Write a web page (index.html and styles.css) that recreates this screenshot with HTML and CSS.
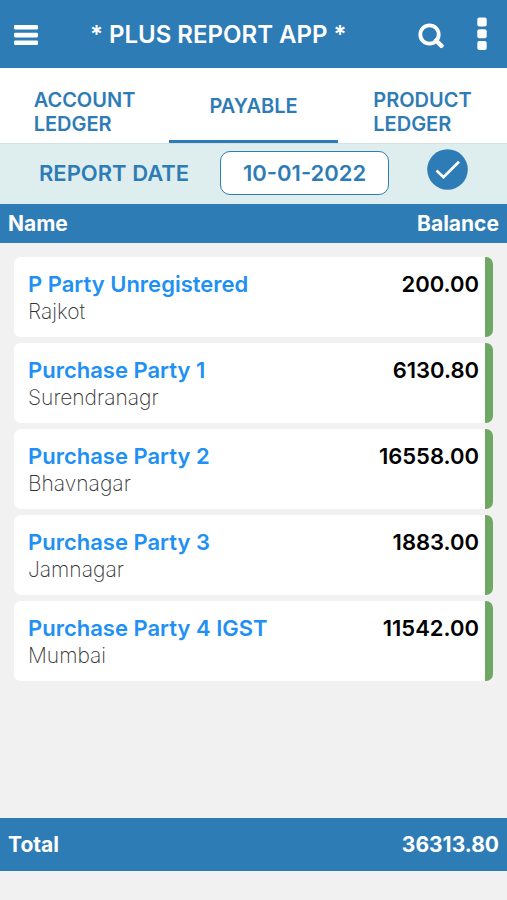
FILE: index.html
```html
<!DOCTYPE html>
<html lang="en">
<head>
  <meta charset="UTF-8">
  <meta name="viewport" content="width=device-width, initial-scale=1.0">
  <title>Plus Report App</title>
  <link rel="stylesheet" href="styles.css">
</head>
<body>
  <header class="app-bar">
    <button class="icon-btn" type="button" aria-label="Menu">
      <svg width="24" height="24" viewBox="0 0 24 24" fill="currentColor">
        <rect x="0" y="3" width="24" height="4.6" rx="1.3"/>
        <rect x="0" y="10.8" width="24" height="4.6" rx="1.3"/>
        <rect x="0" y="18.4" width="24" height="4.6" rx="1.3"/>
      </svg>
    </button>
    <h1>* PLUS REPORT APP *</h1>
    <button class="icon-btn search-btn" type="button" aria-label="Search">
      <svg width="26" height="30" viewBox="0 0 26 30" fill="none" stroke="currentColor">
        <circle cx="11.5" cy="15.5" r="9.2" stroke-width="3.8"/>
        <path d="M18 21.5L23.5 26.8" stroke-width="4.4" stroke-linecap="round"/>
      </svg>
    </button>
    <button class="icon-btn" type="button" aria-label="More options">
      <svg width="10" height="34" viewBox="0 0 10 34" fill="currentColor">
        <rect x="0.3" y="0.5" width="9.4" height="9" rx="2"/>
        <rect x="0.3" y="12.2" width="9.4" height="9" rx="2"/>
        <rect x="0.3" y="24" width="9.4" height="9" rx="2"/>
      </svg>
    </button>
  </header>

  <nav class="tabs">
    <button class="tab two-line" type="button"><span>ACCOUNT LEDGER</span></button>
    <button class="tab active" type="button"><span>PAYABLE</span></button>
    <button class="tab two-line" type="button"><span>PRODUCT LEDGER</span></button>
  </nav>

  <form class="report-date">
    <label for="reportDate">REPORT DATE</label>
    <input type="text" id="reportDate" value="10-01-2022">
    <button class="apply-btn" type="button" aria-label="Apply">
      <svg width="41" height="41" viewBox="0 0 41 41" fill="none">
        <circle cx="20.5" cy="20.5" r="20.3" fill="#2e7cb5"/>
        <path d="M9.5 21.5L16.5 28.2L32 12.8" stroke="#fff" stroke-width="2.7"/>
      </svg>
    </button>
  </form>

  <table class="ledger">
    <thead>
      <tr><th>Name</th><th>Balance</th></tr>
    </thead>
    <tbody>
      <tr>
        <td><a href="#">P Party Unregistered</a><span class="city">Rajkot</span></td>
        <td class="amount">200.00</td>
      </tr>
      <tr>
        <td><a href="#">Purchase Party 1</a><span class="city">Surendranagr</span></td>
        <td class="amount">6130.80</td>
      </tr>
      <tr>
        <td><a href="#">Purchase Party 2</a><span class="city">Bhavnagar</span></td>
        <td class="amount">16558.00</td>
      </tr>
      <tr>
        <td><a href="#">Purchase Party 3</a><span class="city">Jamnagar</span></td>
        <td class="amount">1883.00</td>
      </tr>
      <tr>
        <td><a href="#">Purchase Party 4 IGST</a><span class="city">Mumbai</span></td>
        <td class="amount">11542.00</td>
      </tr>
    </tbody>
    <tfoot>
      <tr><th>Total</th><td>36313.80</td></tr>
    </tfoot>
  </table>
</body>
</html>
```

FILE: styles.css
```css
* {
  box-sizing: border-box;
  margin: 0;
  padding: 0;
}

body {
  display: flex;
  flex-direction: column;
  min-height: 100vh;
  padding-bottom: 29px;
  font-family: Inter, 'Liberation Sans', sans-serif;
  font-size: 22px;
  background-color: #f1f1f1;
}

button {
  border: none;
  background: none;
  font: inherit;
  color: inherit;
  cursor: pointer;
}

svg {
  display: block;
}

/* Top bar */
.app-bar {
  display: flex;
  align-items: center;
  padding: 0 20px 0 14px;
  height: 68px;
  background-color: #2e7cb5;
  color: white;
}

.app-bar h1 {
  flex: 1;
  padding-left: 52px;
  font-size: 24px;
  font-weight: 600;
}

.search-btn {
  margin-right: 33px;
}

/* Tabs */
.tabs {
  display: grid;
  grid-template-columns: repeat(3, 1fr);
  height: 75px;
  background-color: white;
  color: #2e7cb5;
  font-size: 20px;
  font-weight: 600;
  line-height: 24px;
}

.tab {
  display: flex;
  align-items: center;
  justify-content: center;
  padding-top: 4px;
  border-bottom: 3px solid transparent;
  text-align: left;
}

.tab span {
  width: min-content;
}

.tab.two-line {
  padding-top: 16px;
}

.tab.active {
  border-bottom-color: #2e7cb5;
}

/* Report date */
.report-date {
  display: flex;
  align-items: center;
  padding: 0 39px 2px;
  height: 61px;
  background-color: #deeeef;
  border-top: 1px solid #d3dfe0;
  color: #2e7cb5;
  font-weight: 600;
}

.report-date input {
  width: 169px;
  height: 44px;
  margin-left: 31px;
  border: 1px solid #2e7cb5;
  border-radius: 10px;
  background-color: white;
  color: inherit;
  font: inherit;
  text-align: center;
}

.apply-btn {
  margin-left: auto;
  margin-bottom: 8px;
}

/* Ledger */
.ledger {
  display: flex;
  flex-direction: column;
  flex: 1;
}

.ledger tr {
  display: flex;
  justify-content: space-between;
}

.ledger thead tr,
.ledger tfoot tr {
  align-items: center;
  padding: 0 8px;
  background-color: #2e7cb5;
  color: white;
  font-size: 21px;
  font-weight: 700;
}

.ledger thead tr {
  height: 39px;
}

.ledger tfoot tr {
  height: 53px;
}

.ledger tbody {
  display: flex;
  flex-direction: column;
  flex: 1;
  gap: 6px;
  padding: 14px;
}

.ledger tbody tr {
  min-height: 80px;
  padding: 14px 6px 12px 14px;
  border-right: 8px solid #6fa864;
  border-radius: 7px;
  background-color: white;
  line-height: 27px;
}

.ledger a {
  display: block;
  color: #2190f5;
  font-weight: 600;
  text-decoration: none;
}

.city {
  color: #333;
  font-size: 21px;
  font-weight: 200;
}

.amount {
  color: #000;
  font-weight: 600;
}
```
